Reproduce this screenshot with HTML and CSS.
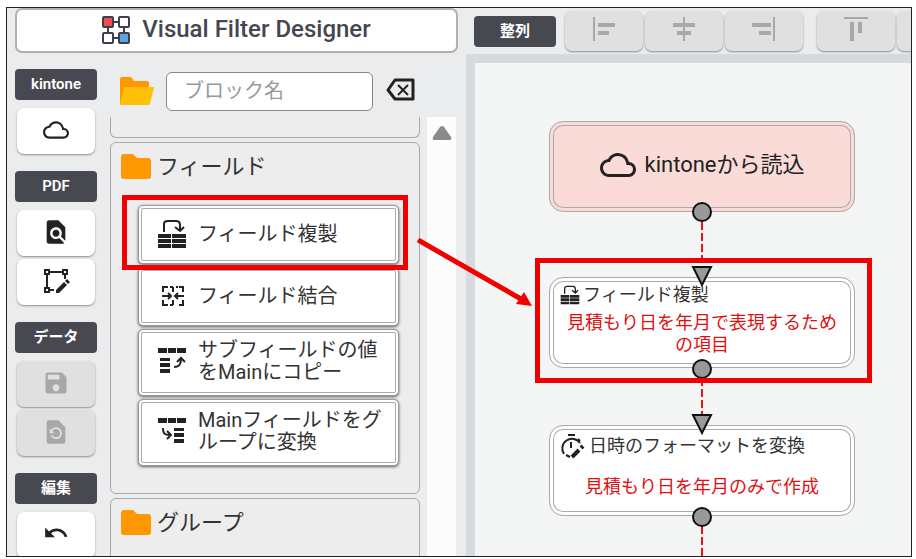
FILE: index.html
```html
<!DOCTYPE html>
<html lang="ja">
<head>
    <meta charset="UTF-8">
    <meta name="viewport" content="width=device-width, initial-scale=1.0">
    <title>Visual Filter Designer</title>
    <link rel="stylesheet" href="styles.css">
</head>
<body>
    <div class="app">
        <aside class="side">
            <button class="brand">
                <svg class="line" width="28" height="28" viewBox="0 0 28 28">
                    <path d="M11 6h6M11 22h6M6 11v6M22 11v6"/>
                    <rect x="1" y="1" width="10" height="10" rx="1" fill="#ee4f50"/>
                    <rect x="17" y="1" width="10" height="10" rx="1" fill="#fff"/>
                    <rect x="1" y="17" width="10" height="10" rx="1" fill="#fff"/>
                    <rect x="17" y="17" width="10" height="10" rx="1" fill="#5aa5e0"/>
                </svg>
                <span>Visual Filter Designer</span>
            </button>

            <div class="side-body">
                <nav class="rail">
                    <section class="tools">
                        <h2 class="tag">kintone</h2>
                        <button class="tool" aria-label="読込">
                            <svg width="26" height="26" viewBox="0 0 24 24"><path d="M19.35 10.04A7.49 7.49 0 0 0 12 4C9.11 4 6.6 5.64 5.35 8.04A5.994 5.994 0 0 0 0 14c0 3.31 2.69 6 6 6h13c2.76 0 5-2.24 5-5 0-2.64-2.05-4.78-4.65-4.96zM19 18H6c-2.21 0-4-1.79-4-4 0-2.05 1.53-3.76 3.56-3.97l1.07-.11.5-.95A5.469 5.469 0 0 1 12 6c2.62 0 4.88 1.86 5.39 4.43l.3 1.5 1.53.11A2.98 2.98 0 0 1 22 15c0 1.65-1.35 3-3 3z"/></svg>
                        </button>
                    </section>
                    <section class="tools">
                        <h2 class="tag">PDF</h2>
                        <button class="tool" aria-label="プレビュー">
                            <svg width="28" height="28" viewBox="0 0 24 24"><path d="M20 19.59V8l-6-6H6c-1.1 0-1.99.9-1.99 2L4 20c0 1.1.89 2 1.99 2H18c.45 0 .85-.15 1.19-.4l-4.43-4.43c-.8.52-1.74.83-2.76.83-2.76 0-5-2.24-5-5s2.24-5 5-5 5 2.24 5 5c0 1.02-.31 1.96-.83 2.75L20 19.59zM9 13c0 1.66 1.34 3 3 3s3-1.34 3-3-1.34-3-3-3-3 1.34-3 3z"/></svg>
                        </button>
                        <button class="tool" aria-label="レイアウト編集">
                            <svg class="line" width="28" height="28" viewBox="0 0 28 28">
                                <path d="M8 5h12M5 8v12M23 8v4M8 23h4"/>
                                <path d="M3 3h4v4H3zM21 3h4v4h-4zM3 21h4v4H3z"/>
                                <path class="solid" d="M14 26v-3l8-8 3 3-8 8zM23 14l2-2 3 3-2 2z"/>
                            </svg>
                        </button>
                    </section>
                    <section class="tools">
                        <h2 class="tag">データ</h2>
                        <button class="tool" disabled aria-label="保存">
                            <svg width="28" height="28" viewBox="0 0 24 24"><path d="M17 3H5a2 2 0 0 0-2 2v14a2 2 0 0 0 2 2h14c1.1 0 2-.9 2-2V7l-4-4zm-5 16c-1.66 0-3-1.34-3-3s1.34-3 3-3 3 1.34 3 3-1.34 3-3 3zm3-10H5V5h10v4z"/></svg>
                        </button>
                        <button class="tool" disabled aria-label="復元">
                            <svg width="28" height="28" viewBox="0 0 24 24"><path d="M14 2H6c-1.1 0-1.99.9-1.99 2L4 20c0 1.1.89 2 1.99 2H18c1.1 0 2-.9 2-2V8l-6-6zm-2 16c-2.05 0-3.81-1.24-4.58-3h1.71c.63.9 1.68 1.5 2.87 1.5 1.93 0 3.5-1.57 3.5-3.5S13.93 9.5 12 9.5c-1.35 0-2.52.78-3.1 1.9l1.6 1.6h-4V9l1.3 1.3C8.69 8.92 10.23 8 12 8c2.76 0 5 2.24 5 5s-2.24 5-5 5z"/></svg>
                        </button>
                    </section>
                    <section class="tools">
                        <h2 class="tag">編集</h2>
                        <button class="tool" aria-label="元に戻す">
                            <svg width="26" height="26" viewBox="0 0 24 24"><path d="M12.5 7c-2.65 0-5.05.99-6.9 2.6L2 6v9h9l-3.62-3.62c1.39-1.16 3.16-1.88 5.12-1.88 3.54 0 6.55 2.31 7.6 5.5l2.37-.78C21.08 10.03 17.15 7 12.5 7z"/></svg>
                        </button>
                    </section>
                </nav>

                <div class="palette">
                    <div class="search">
                        <svg width="36" height="28" viewBox="0 0 36 28">
                            <path fill="#ff9800" d="M1 2a2 2 0 0 1 2-2h9l3 4h13a2 2 0 0 1 2 2v20H1z"/>
                            <path fill="#ffc107" d="M6 10h28a1 1 0 0 1 1 1l-4 15a2 2 0 0 1-2 2H2a1 1 0 0 1-1-1l4-16a1 1 0 0 1 1-1z"/>
                        </svg>
                        <input class="search-box" type="text" placeholder="ブロック名" aria-label="ブロック名">
                        <button class="clear" aria-label="クリア">
                            <svg class="line" width="30" height="24" viewBox="0 0 30 24"><path stroke-width="3" stroke-linejoin="round" d="M9 2h18v19H9L2 12z"/><path d="M12 7l10 10M22 7L12 17"/></svg>
                        </button>
                    </div>

                    <div class="list">
                        <div class="groups">
                            <section class="group group-end"></section>
                            <section class="group">
                                <h3 class="group-name">
                                    <svg class="folder" width="30" height="26" viewBox="0 0 30 26"><path d="M0 3a3 3 0 0 1 3-3h9l4 4h11a3 3 0 0 1 3 3v15a3 3 0 0 1-3 3H3a3 3 0 0 1-3-3z"/></svg>
                                    フィールド
                                </h3>
                                <div class="blocks">
                                    <button class="block">
                                        <svg width="30" height="30" viewBox="0 0 30 30"><use href="#copy"/></svg>
                                        <span>フィールド複製</span>
                                    </button>
                                    <button class="block">
                                        <svg class="line" width="30" height="30" viewBox="0 0 30 30"><path d="M6 11V6h5M13 6h3M19 6h2M22 6h4v5M6 19v5h5M13 24h3M22 24h4v-5M16 6v5M16 19v5M5 15h8M19 15h8M11 12l3 3-3 3M21 12l-3 3 3 3"/></svg>
                                        <span>フィールド結合</span>
                                    </button>
                                    <button class="block block-tall">
                                        <svg width="30" height="30" viewBox="0 0 30 30"><path d="M1 2h9v5H1zM11 2h8v5h-8zM20 2h9v5h-9zM3 12h10v3H3zM3 17h10v4H3zM3 23h10v4H3z"/><path class="line" d="M17 21c5 0 7-2 7-8M20 16l4-4 4 4"/></svg>
                                        <span>サブフィールドの値をMainにコピー</span>
                                    </button>
                                    <button class="block block-tall">
                                        <svg width="30" height="30" viewBox="0 0 30 30"><path d="M1 2h9v5H1zM11 2h8v5h-8zM20 2h9v5h-9zM17 12h10v3H17zM17 17h10v4H17zM17 23h10v4H17z"/><path class="line" d="M6 12c0 5 1 7 7 7M10 15l4 4-4 4"/></svg>
                                        <span>Mainフィールドをグループに変換</span>
                                    </button>
                                </div>
                            </section>
                            <section class="group">
                                <h3 class="group-name">
                                    <svg class="folder" width="30" height="26" viewBox="0 0 30 26"><path d="M0 3a3 3 0 0 1 3-3h9l4 4h11a3 3 0 0 1 3 3v15a3 3 0 0 1-3 3H3a3 3 0 0 1-3-3z"/></svg>
                                    グループ
                                </h3>
                            </section>
                        </div>
                        <div class="scroll">
                            <svg width="20" height="16" viewBox="0 0 20 16"><path fill="#8a8a8a" d="M8 2q2-2 4 0l7 10q1 3-1 3H2q-2 0-1-3z"/></svg>
                        </div>
                    </div>
                </div>
            </div>
        </aside>

        <main class="work">
            <div class="toolbar">
                <h2 class="tag">整列</h2>
                <div class="aligns">
                    <button class="align" disabled aria-label="左揃え"><svg width="24" height="24" viewBox="0 0 24 24"><path d="M1 0h2v24H1zM6 6h17v4H6zM6 14h11v4H6z"/></svg></button>
                    <button class="align" disabled aria-label="中央揃え"><svg width="24" height="24" viewBox="0 0 24 24"><path d="M11 0h2v24h-2zM1 6h22v4H1zM5 14h14v4H5z"/></svg></button>
                    <button class="align" disabled aria-label="右揃え"><svg width="24" height="24" viewBox="0 0 24 24"><path d="M21 0h2v24h-2zM0 6h19v4H0zM7 14h12v4H7z"/></svg></button>
                </div>
                <div class="aligns">
                    <button class="align" disabled aria-label="上揃え"><svg width="24" height="24" viewBox="0 0 24 24"><path d="M0 0h24v2H0zM6 5h4v19H6zM14 5h4v11h-4z"/></svg></button>
                    <button class="align" disabled aria-label="上下中央揃え"></button>
                </div>
            </div>
            <div class="canvas">
                <svg class="wires" width="320" height="500" viewBox="0 0 320 500"><path d="M153 90v64M153 246v56M153 394v106"/></svg>
                <div class="node node-start">
                    <svg width="36" height="36" viewBox="0 0 24 24"><path d="M19.35 10.04A7.49 7.49 0 0 0 12 4C9.11 4 6.6 5.64 5.35 8.04A5.994 5.994 0 0 0 0 14c0 3.31 2.69 6 6 6h13c2.76 0 5-2.24 5-5 0-2.64-2.05-4.78-4.65-4.96zM19 18H6c-2.21 0-4-1.79-4-4 0-2.05 1.53-3.76 3.56-3.97l1.07-.11.5-.95A5.469 5.469 0 0 1 12 6c2.62 0 4.88 1.86 5.39 4.43l.3 1.5 1.53.11A2.98 2.98 0 0 1 22 15c0 1.65-1.35 3-3 3z"/></svg>
                    <span>kintoneから読込</span>
                </div>
                <div class="node node-copy">
                    <div class="node-name">
                        <svg width="20" height="20" viewBox="0 0 30 30"><use href="#copy"/></svg>
                        <span>フィールド複製</span>
                    </div>
                    <p class="note">見積もり日を年月で表現するための項目</p>
                </div>
                <div class="node node-date">
                    <div class="node-name">
                        <svg class="line" width="26" height="26" viewBox="0 0 26 26"><path d="M8 2h7M11 9v6M18 6l2 2M4 21A9 9 0 1 1 20 10M6 22l4 2"/><path stroke-width="4" d="M12 24l7-7M21 15l2-2"/></svg>
                        <span>日時のフォーマットを変換</span>
                    </div>
                    <p class="note">見積もり日を年月のみで作成</p>
                </div>
                <svg class="ports" width="320" height="500" viewBox="0 0 320 500">
                    <circle cx="153" cy="91" r="9"/>
                    <circle cx="153" cy="248" r="9"/>
                    <circle cx="153" cy="396" r="9"/>
                    <path d="M144 146h18l-9 18zM144 294h18l-9 18z"/>
                </svg>
            </div>
        </main>

        <div class="mark mark-block"></div>
        <div class="mark mark-node"></div>
        <svg class="arrow" width="120" height="72" viewBox="0 0 120 72"><path d="M1 3L104 62" stroke="#f00000" stroke-width="5"/><path d="M115 69L99 67L107 55z" fill="#f00000"/></svg>
    </div>

    <svg class="defs" width="0" height="0">
        <symbol id="copy" viewBox="0 0 30 30">
            <path d="M1 15h13v4H1zM15 15h14v4H15zM1 20h13v4H1zM15 20h14v4H15zM1 25h13v4H1zM15 25h14v4H15z"/>
            <path class="line" d="M7 13V5q0-3 4-3h8q4 0 4 4v5M18 8l5 4 4-4"/>
        </symbol>
    </svg>
</body>
</html>
```
FILE: styles.css
```css
*{
    box-sizing: border-box;
}
body{
    margin: 0;
    height: 100vh;
    padding: 7px 4px 2px 6px;
    background-color: white;
    color: #333;
    font-family: Roboto, "Noto Sans CJK JP", sans-serif;
}
h2,h3,p{
    margin: 0;
}
button,input{
    font-family: inherit;
    color: inherit;
}
svg{
    flex: none;
    fill: #222;
}
.line{
    fill: none;
    stroke: #222;
    stroke-width: 2;
}
.solid{
    fill: #222;
    stroke: none;
}
.defs{
    position: absolute;
}
.app{
    position: relative;
    display: flex;
    height: 100%;
    border: 1px solid #222;
    background-color: #ebecee;
    overflow: hidden;
}

/* left side */
.side{
    display: flex;
    flex-direction: column;
    flex: none;
    width: 459px;
    padding: 0 8px;
}
.brand{
    display: flex;
    justify-content: center;
    align-items: flex-start;
    gap: 12px;
    flex: none;
    height: 45px;
    padding: 6px 0 0;
    border: 2px solid #b0b0b0;
    border-radius: 7px;
    background-color: white;
    color: #464650;
    font-size: 24px;
    font-weight: 500;
    line-height: 26px;
}
.brand .line{
    stroke: #3f3f4a;
}
.side-body{
    display: flex;
    flex: 1;
    gap: 13px;
    min-height: 0;
}
.rail{
    display: flex;
    flex-direction: column;
    gap: 17px;
    width: 82px;
    padding-top: 16px;
}
.tools{
    display: flex;
    flex-direction: column;
    align-items: center;
    gap: 3px;
}
.tag{
    width: 82px;
    height: 31px;
    border-radius: 4px;
    background-color: #484850;
    color: white;
    font-size: 15px;
    font-weight: 600;
    line-height: 30px;
    text-align: center;
}
.tools .tag{
    margin-bottom: 5px;
}
.tool,.align{
    display: flex;
    justify-content: center;
    align-items: center;
    flex: none;
    width: 78px;
    height: 46px;
    padding: 0 0 2px;
    border: none;
    border-radius: 7px;
    background-color: white;
    box-shadow: 0 1px 2px rgba(0,0,0,.4);
}
.tool:disabled,.align:disabled{
    background-color: #e0e0e0;
}
.tool:disabled svg,.align:disabled svg{
    fill: #a8a8a8;
}

/* block palette */
.palette{
    display: flex;
    flex-direction: column;
    flex: 1;
    min-width: 0;
    margin-right: 2px;
}
.search{
    display: flex;
    align-items: center;
    gap: 11px;
    height: 64px;
    padding: 12px 0 0 9px;
}
.search-box{
    flex: none;
    width: 207px;
    height: 39px;
    padding: 0 17px;
    border: 1px solid #888;
    border-radius: 6px;
    background-color: white;
    font-size: 20px;
}
.search-box::placeholder{
    color: #999;
}
.clear{
    display: flex;
    padding: 0 0 2px 2px;
    border: none;
    background: none;
}
.list{
    display: flex;
    flex: 1;
    gap: 7px;
    min-height: 0;
}
.groups{
    display: flex;
    flex-direction: column;
    flex: 1;
    gap: 4px;
    overflow: hidden;
}
.group{
    flex: none;
    min-height: 80px;
    padding: 8px 20px 27px 27px;
    border: 1px solid #aaa;
    border-radius: 6px;
    background-color: #ededed;
}
.group-end{
    min-height: 0;
    height: 21px;
    padding: 0;
    border-top: none;
    border-radius: 0 0 6px 6px;
}
.group-name{
    display: flex;
    align-items: center;
    gap: 6px;
    height: 32px;
    margin-left: -17px;
    font-size: 22px;
    font-weight: 400;
    line-height: 32px;
}
.folder{
    fill: #ff9800;
}
.blocks{
    display: flex;
    flex-direction: column;
    gap: 3px;
    margin-top: 22px;
}
.block{
    display: flex;
    align-items: center;
    gap: 11px;
    min-height: 59px;
    padding: 0 12px 2px 18px;
    border: 1px solid #999;
    border-radius: 5px;
    background-color: white;
    box-shadow: inset 0 0 0 2px white, inset 0 0 0 3px #aaa, 0 1px 3px rgba(0,0,0,.6);
    font-size: 20px;
    line-height: 22px;
    text-align: left;
    word-break: break-all;
}
.block-tall{
    min-height: 67px;
    padding-bottom: 4px;
}
.scroll{
    width: 29px;
    padding: 8px 5px;
    background-color: #fcfcfc;
}

/* work area */
.work{
    display: flex;
    flex-direction: column;
    flex: 1;
    min-width: 0;
}
.toolbar{
    display: flex;
    align-items: center;
    gap: 14px;
    height: 46px;
    padding: 0 8px;
    overflow: hidden;
}
.toolbar .tag{
    flex: none;
    margin-right: -5px;
}
.aligns{
    display: flex;
    gap: 2px;
}
.align{
    height: 40px;
    padding-bottom: 4px;
}
.canvas{
    position: relative;
    flex: 1;
    border: solid #d6dadf;
    border-width: 9px 0 0 9px;
    background-color: #f4f6f5;
    overflow: hidden;
}
.wires,.ports{
    position: absolute;
    left: 74px;
    top: 58px;
}
.wires path{
    stroke: #ee1010;
    stroke-width: 2;
    stroke-dasharray: 8 3;
}
.ports{
    fill: #999;
    stroke: #111;
    stroke-width: 2;
}
.node{
    position: absolute;
    left: 74px;
    width: 306px;
    height: 91px;
    padding: 4px 10px;
    border: 1px solid #aaa;
    border-radius: 14px;
    background-color: white;
    box-shadow: inset 0 0 0 3px white, inset 0 0 0 4px #aaa;
    font-size: 18px;
    line-height: 22px;
}
.node-start{
    top: 58px;
    display: flex;
    justify-content: center;
    align-items: center;
    gap: 9px;
    padding-bottom: 8px;
    background-color: #fadbd8;
    box-shadow: inset 0 0 0 3px #fadbd8, inset 0 0 0 4px #aaa;
    color: #222;
    font-size: 22px;
}
.node-copy{
    top: 214px;
}
.node-date{
    top: 362px;
}
.node-name{
    display: flex;
    align-items: center;
    gap: 3px;
    height: 26px;
}
.note{
    margin-top: 4px;
    color: #e01010;
    text-align: center;
}
.node-date .node-name{
    height: 32px;
}
.node-date .note{
    margin-top: 14px;
}

/* highlight frames over the screen */
.mark{
    position: absolute;
    border: 5px solid #f00000;
}
.mark-block{
    left: 115px;
    top: 187px;
    width: 286px;
    height: 75px;
}
.mark-node{
    left: 528px;
    top: 250px;
    width: 337px;
    height: 125px;
}
.arrow{
    position: absolute;
    left: 410px;
    top: 229px;
}
```
